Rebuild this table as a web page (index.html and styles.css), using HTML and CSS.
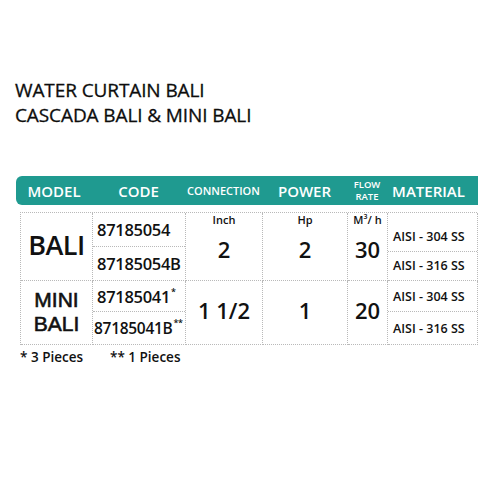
FILE: index.html
```html
<!DOCTYPE html>
<html>
<head>
<meta charset="utf-8">
<link rel="stylesheet" href="styles.css">
</head>
<body>
<div class="page">
  <h1 class="title"><span>WATER CURTAIN BALI</span><span>CASCADA BALI &amp; MINI BALI</span></h1>

  <div class="head">
    <div class="h h-model">MODEL</div>
    <div class="h h-code">CODE</div>
    <div class="h h-small">CONNECTION</div>
    <div class="h">POWER</div>
    <div class="h h-flow"><span>FLOW</span><span>RATE</span></div>
    <div class="h h-mat">MATERIAL</div>
  </div>

  <div class="table">
    <!-- BALI row -->
    <div class="cell model r1">BALI</div>
    <div class="cell split r1">
      <div class="sub code">87185054</div>
      <div class="sub code">87185054B</div>
    </div>
    <div class="cell val r1"><span class="unit">Inch</span><span class="big">2</span></div>
    <div class="cell val r1"><span class="unit">Hp</span><span class="big">2</span></div>
    <div class="cell val r1"><span class="unit">M<sup>3</sup>/ h</span><span class="big">30</span></div>
    <div class="cell split r1">
      <div class="sub mat first">AISI - 304 SS</div>
      <div class="sub mat">AISI - 316 SS</div>
    </div>

    <!-- MINI BALI row -->
    <div class="cell model mini r2"><span>MINI</span><span>BALI</span></div>
    <div class="cell split r2">
      <div class="sub code m1">87185041<sup>*</sup></div>
      <div class="sub code m2">87185041B<sup>**</sup></div>
    </div>
    <div class="cell val2 r2"><span class="big">1 1/2</span></div>
    <div class="cell val2 r2"><span class="big">1</span></div>
    <div class="cell val2 r2"><span class="big">20</span></div>
    <div class="cell split r2">
      <div class="sub mat">AISI - 304 SS</div>
      <div class="sub mat">AISI - 316 SS</div>
    </div>
  </div>

  <div class="notes"><span>* 3 Pieces</span><span>** 1 Pieces</span></div>
</div>
</body>
</html>
```

FILE: styles.css
```css
html, body {
  margin: 0;
  padding: 0;
  background: #ffffff;
}
body {
  font-family: "Open Sans", "Liberation Sans", sans-serif;
  color: #111111;
  width: 500px;
  height: 500px;
  overflow: hidden;
}
.page {
  padding-top: 78px;
}
.title {
  margin: 0 0 48px 15px;
  font-size: 19px;
  font-weight: 400;
  line-height: 25px;
  letter-spacing: -0.1px;
  color: #0d0d0d;
  display: flex;
  flex-direction: column;
  -webkit-text-stroke: 0.3px #0d0d0d;
}
.head {
  margin-left: 16px;
  width: 462px;
  height: 29px;
  background: #1f9a90;
  border-radius: 6px 0 0 6px;
  display: grid;
  grid-template-columns: 76px 93px 77px 85px 40px 91px;
  align-items: center;
  color: #ffffff;
}
.h {
  text-align: center;
  font-size: 15px;
  line-height: 16px;
  font-weight: 600;
}
.h-small {
  font-size: 11px;
}
.h-flow {
  font-size: 9.5px;
  line-height: 12px;
  display: flex;
  flex-direction: column;
  align-items: center;
}
.h-mat {
  padding-right: 8px;
}
.table {
  margin: 7px 0 0 20px;
  width: 457px;
  display: grid;
  grid-template-columns: 72px 93px 77px 85px 40px 90px;
  grid-template-rows: 68px 64px;
  border-top: 1px dotted #b9b9b9;
  border-left: 1px dotted #b9b9b9;
  box-sizing: border-box;
}
.cell {
  border-right: 1px dotted #b9b9b9;
  border-bottom: 1px dotted #b9b9b9;
  box-sizing: border-box;
  min-width: 0;
}
.model {
  display: flex;
  align-items: center;
  justify-content: center;
  font-size: 27px;
  font-weight: 600;
  padding-bottom: 4px;
  text-align: center;
  letter-spacing: -0.5px;
}
.model.mini {
  flex-direction: column;
  font-family: "Liberation Sans", "Open Sans", sans-serif;
  font-weight: 400;
  -webkit-text-stroke: 0.6px #111111;
  font-size: 21px;
  line-height: 24px;
  letter-spacing: 0;
  padding-bottom: 2px;
}
.split {
  display: flex;
  flex-direction: column;
}
.sub {
  flex: 1;
  display: flex;
  align-items: center;
  white-space: nowrap;
}
.sub + .sub {
  border-top: 1px dotted #b9b9b9;
}
.r2 .sub:first-child {
  flex: 31;
}
.r2 .sub + .sub {
  flex: 33;
}
.code {
  font-size: 16.5px;
  padding-left: 4px;
  font-weight: 600;
  letter-spacing: -0.3px;
}
.code.m2 {
  padding-left: 1px;
  font-size: 15.5px;
}
.code sup {
  font-size: 9px;
  align-self: flex-start;
  margin-top: 6px;
  margin-left: 1px;
  line-height: 1;
}
.mat {
  font-size: 12.5px;
  font-weight: 600;
  padding-left: 5px;
}
.mat.first {
  padding-top: 9px;
}
.val {
  display: flex;
  flex-direction: column;
  align-items: center;
}
.unit {
  font-size: 11px;
  line-height: 14px;
  font-weight: 600;
}
.unit sup {
  font-size: 7px;
  line-height: 0;
}
.big {
  font-size: 22px;
  font-weight: 600;
  line-height: 30px;
  margin-top: 7px;
}
.val2 {
  display: flex;
  align-items: center;
  justify-content: center;
  padding-bottom: 6px;
}
.val2 .big {
  margin-top: 0;
}
.notes {
  margin: 3px 0 0 20px;
  font-size: 13.5px;
  font-weight: 600;
  display: flex;
  gap: 27px;
}
```
